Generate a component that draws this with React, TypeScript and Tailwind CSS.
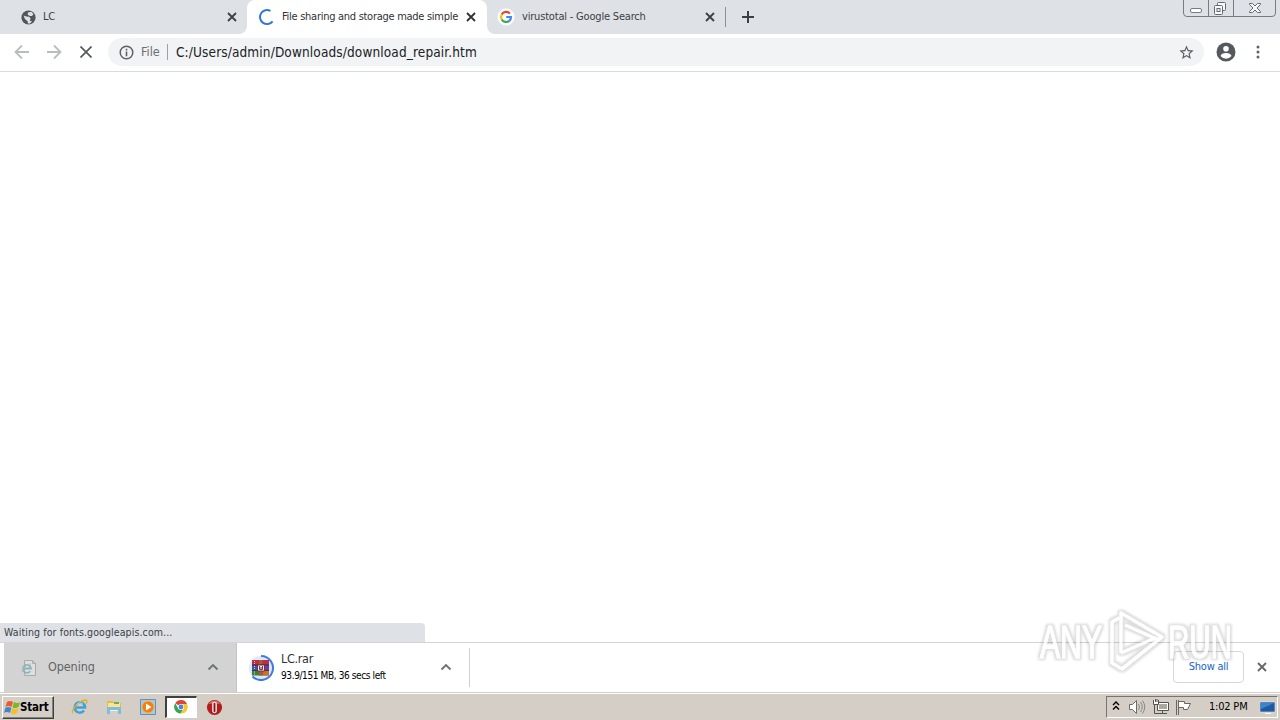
import { type ReactNode } from 'react';
import clsx from 'clsx';

interface IconProps {
  className?: string;
}

function Close({ className }: IconProps) {
  return (
    <svg viewBox="0 0 10 10" className={clsx('shrink-0', className)} fill="none" stroke="currentColor">
      <path d="M1 1l8 8M9 1l-8 8" strokeWidth="1.8" />
    </svg>
  );
}

function Globe() {
  return (
    <svg viewBox="0 0 24 24" className="h-[17px] w-[17px] shrink-0 text-[#50555b]" fill="currentColor">
      <circle cx="12" cy="12" r="10" />
      <path d="M5 9l4 1.500 4 .5 2 2.500-1 3 3 1-3 3h-3v-3L7 14z" fill="#dee1e6" />
      <path d="M11 5l5-1 3 3-2 3h-3l-3-2z" fill="#dee1e6" />
    </svg>
  );
}

function Spinner() {
  return (
    <svg viewBox="0 0 18 18" className="h-[18px] w-[18px] shrink-0" fill="none">
      <path d="M12.500 3A7 7 0 1 0 14.600 13.300" stroke="#3478d4" strokeWidth="2" />
    </svg>
  );
}

function Google() {
  return (
    <svg viewBox="0 0 18 18" className="h-[18px] w-[18px] shrink-0">
      <circle cx="9" cy="9" r="8.500" fill="#fff" />
      <g fill="none" strokeWidth="2.200">
        <path d="M12.900 5.600A5 5 0 0 0 4.700 6.500" stroke="#ea4335" />
        <path d="M4.700 6.500a5 5 0 0 0 0 5" stroke="#fbbc05" />
        <path d="M4.700 11.500a5 5 0 0 0 7.600 1.300" stroke="#34a853" />
        <path d="M12.300 12.800A5 5 0 0 0 14 9H9.200" stroke="#4285f4" />
      </g>
    </svg>
  );
}

function Chevron({ className }: IconProps) {
  return (
    <svg viewBox="0 0 12 8" className={clsx('mb-px h-2 w-3 shrink-0', className)} fill="none">
      <path d="M1.500 6.500L6 2l4.500 4.500" stroke="#6f7377" strokeWidth="1.900" />
    </svg>
  );
}

function TabCorner({ flip }: { flip?: boolean }) {
  return (
    <svg viewBox="0 0 8 8" className={clsx('h-2 w-2 shrink-0 self-end', flip && '-scale-x-100')}>
      <path d="M8 0v8H0a8 8 0 0 0 8-8z" fill="#fff" />
    </svg>
  );
}

function TabStrip() {
  return (
    <div className="flex h-[34px] bg-[#dee1e6] text-[11px] text-[#3c4043]">
      <div className="flex w-[239px] items-center pl-5">
        <Globe />
        <span className="ml-[6px] flex-1 tracking-[-0.2px]">LC</span>
        <Close className="mr-[2px] h-[10px] w-[10px]" />
      </div>
      <TabCorner />
      <div className="flex w-[240px] items-center rounded-t-lg bg-white pl-[11px] text-[#303134]">
        <Spinner />
        <span className="ml-[6px] w-[179px] whitespace-nowrap tracking-[-0.28px]">File sharing and storage made simple</span>
        <Close className="ml-[5px] h-[10px] w-[10px]" />
      </div>
      <TabCorner flip />
      <div className="flex w-[230px] items-center pl-[2px]">
        <Google />
        <span className="ml-[7px] w-[183px] whitespace-nowrap tracking-[-0.19px]">virustotal - Google Search</span>
        <Close className="h-[10px] w-[10px]" />
      </div>
      <div className="mt-[7px] h-5 w-px bg-[#8b9095]" />
      <svg viewBox="0 0 12 12" className="mt-[11px] ml-4 h-3 w-3">
        <path d="M6 0v12M0 6h12" stroke="#3c4043" strokeWidth="2" />
      </svg>
      <svg viewBox="0 0 94 18" className="mr-[3px] ml-auto h-[18px] w-[94px]" fill="none" stroke="#777b84">
        <path d="M.5 0v13q0 3.500 3.500 3.500h85q3.500 0 3.500-3.500V0M25.500 0v16M50.500 0v16" />
        <rect x="7.500" y="8.500" width="11" height="4" rx="1.500" fill="#fff" />
        <g fill="#f8f9fa" stroke="#656972">
          <rect x="34.500" y="2.500" width="8" height="8" rx="1" />
          <rect x="31.500" y="5.500" width="8" height="9" rx="1" />
          <rect x="34" y="8.500" width="3" height="3" />
          <path d="M66.500 3.500h3l2.500 2.500 2.500-2.500h3v1L74 8l3.500 3.500v1h-3L72 10l-2.500 2.500h-3v-1L70 8l-3.500-3.500z" />
        </g>
      </svg>
    </div>
  );
}

function Toolbar() {
  return (
    <div className="flex h-[38px] items-center border-b border-[#d9dbde] bg-white pb-px pl-[14px]">
      <svg viewBox="0 0 16 16" className="h-4 w-4" fill="none" stroke="#babcbe" strokeWidth="1.800">
        <path d="M15 8H2M8 1.500L1.500 8 8 14.500" />
      </svg>
      <svg viewBox="0 0 16 16" className="ml-4 h-4 w-4" fill="none" stroke="#babcbe" strokeWidth="1.800">
        <path d="M1 8h13M8 1.500L14.500 8 8 14.500" />
      </svg>
      <svg viewBox="0 0 12 12" className="ml-[18px] h-3 w-3" fill="none" stroke="#55585c" strokeWidth="1.700">
        <path d="M.5.5l11 11M11.500.5l-11 11" />
      </svg>
      <div className="ml-4 flex h-7 w-[1096px] items-center rounded-full bg-[#f1f3f4] pl-[11px]">
        <svg viewBox="0 0 16 16" className="h-[15px] w-[15px]" fill="none" stroke="#5f6368" strokeWidth="1.600">
          <circle cx="8" cy="8" r="6.700" />
          <path d="M8 7v5M8 4v1.800" strokeWidth="1.700" />
        </svg>
        <span className="ml-[7px] w-[19px] text-[12.500px] text-[#6b6f73]">File</span>
        <div className="ml-[7px] h-4 w-px bg-[#9aa0a6]" />
        <span className="ml-[8px] text-[13.500px] tracking-[0.13px] text-[#202124]">
          C:/Users/admin/Downloads/download_repair.htm
        </span>
        <svg viewBox="0 0 24 24" className="mr-[9px] ml-auto h-[17px] w-[17px]" fill="#5a5e63">
          <path d="M22 9.240l-7.190-.62L12 2 9.190 8.630 2 9.240l5.460 4.730L5.820 21 12 17.270 18.180 21l-1.630-7.030L22 9.240zM12 15.400l-3.760 2.270 1-4.280-3.320-2.880 4.380-.38L12 6.100l1.710 4.040 4.380.38-3.320 2.880 1 4.280L12 15.400z" />
        </svg>
      </div>
      <svg viewBox="0 0 20 20" className="ml-3 h-5 w-5">
        <circle cx="10" cy="10" r="9.500" fill="#55595e" />
        <circle cx="10" cy="6.800" r="2.800" fill="#fff" />
        <path d="M4.500 14q1-3 5.500-3t5.500 3a7 7 0 0 1-11 0z" fill="#fff" />
      </svg>
      <svg viewBox="0 0 4 14" className="ml-5 h-[14px] w-1" fill="#5f6368">
        <circle cx="2" cy="2" r="1.500" />
        <circle cx="2" cy="7" r="1.500" />
        <circle cx="2" cy="12" r="1.500" />
      </svg>
    </div>
  );
}

function RarIcon() {
  return (
    <svg viewBox="0 0 26 26" className="-ml-px h-[26px] w-[26px] shrink-0">
      <circle cx="13" cy="13" r="12" fill="#dbe9fb" />
      <path d="M13 1a12 12 0 1 1-8.500 20.500" stroke="#3d7de0" strokeWidth="2" fill="none" />
      <path d="M4 5h17v5H4z" fill="#c52b45" />
      <path d="M4 10h17v5.500H4z" fill="#3659a5" />
      <path d="M4 15.500h17v5H4z" fill="#39803b" />
      <path d="M14 5h7v5h-7z" fill="#b92f45" />
      <path d="M15 10h6v5h-6z" fill="#6c419d" />
      <path d="M15 15.500h6v5h-6z" fill="#d46b29" />
      <path d="M11 5h3.500v15.500H11z" fill="#a95b2d" />
      <path d="M4 10h17M4 15.500h17" stroke="#242740" strokeWidth=".8" />
      <path d="M9.500 10h7v6h-7z" fill="#eee" stroke="#713645" />
      <path d="M11.500 11v3.500h3V11M13 12v2" stroke="#8b3547" fill="none" />
      <path d="M6.500 6v3m0 2v3m0 2.500v3" stroke="#edcbc0" strokeDasharray="1 1" />
    </svg>
  );
}

function DownloadBar() {
  return (
    <div className="flex h-[50px] border-t border-[#d4d4d6] bg-white pl-1">
      <div className="flex w-[232px] items-center bg-[#d3d3d3] pl-4">
        <svg viewBox="0 0 18 18" className="h-[18px] w-[18px]" fill="none">
          <path d="M4.500 1.500h8l3 3v12h-11z" fill="#dedfda" stroke="#a9aba8" />
          <path d="M12.500 1.500v3h3" stroke="#a9aba8" />
          <path d="M3 9.500h8a4 4 0 1 0-.8 2.800" stroke="#86b3c7" strokeWidth="1.800" />
          <path d="M1.500 13C3 9 7 5 11 5" stroke="#c3bd91" />
        </svg>
        <span className="ml-[10px] flex-1 text-[12.500px] tracking-[-0.1px] text-[#636363]">Opening</span>
        <Chevron className="mr-[17px]" />
      </div>
      <div className="w-px bg-[#c4c4c4]" />
      <div className="flex w-[232px] items-center pl-3">
        <RarIcon />
        <div className="ml-[7px] flex-1 whitespace-nowrap">
          <div className="h-4 text-[12.500px] leading-4 tracking-[-0.3px] text-[#303134]">LC.rar</div>
          <div className="mt-px h-4 text-[10px] leading-4 tracking-[-0.39px] text-black">93.9/151 MB, 36 secs left</div>
        </div>
        <Chevron className="mr-[17px]" />
      </div>
      <div className="my-[5px] w-px bg-[#d0d0d3]" />
      <div className="mt-2 mr-[13px] ml-auto flex h-8 w-[71px] items-center justify-center rounded border border-[#d5d8dc] text-[11px] leading-[12px] tracking-[-0.25px] text-[#1765c5]">
        Show all
      </div>
      <Close className="mt-[19px] mr-[13px] h-[10px] w-[10px] text-[#666]" />
    </div>
  );
}

function Watermark() {
  return (
    <svg viewBox="0 0 212 72" className="pointer-events-none absolute top-[604px] left-[1030px] h-[72px] w-[212px]">
      <defs>
        <filter id="mark-halo" x="-10%" y="-10%" width="120%" height="120%">
          <feMorphology in="SourceAlpha" operator="dilate" radius="1.5" />
          <feGaussianBlur stdDeviation="1.3" />
          <feComponentTransfer result="shade">
            <feFuncA type="linear" slope=".15" />
          </feComponentTransfer>
          <feMerge>
            <feMergeNode in="shade" />
            <feMergeNode in="SourceGraphic" />
          </feMerge>
        </filter>
      </defs>
      <g
        filter="url(#mark-halo)"
        fill="#fff"
        stroke="#fff"
        strokeWidth=".7"
        opacity=".88"
        fontFamily="Liberation Sans, sans-serif"
        fontSize="46"
      >
        <text x="10" y="54" textLength="62" lengthAdjust="spacingAndGlyphs">ANY</text>
        <text x="138" y="54" textLength="64" lengthAdjust="spacingAndGlyphs">RUN</text>
        <path
          d="M91 49V9l41 24-40 32-10-6V18l7-4M95 21l34 15M91 49l34-15"
          fill="none"
          strokeWidth="3"
          strokeLinejoin="round"
        />
      </g>
    </svg>
  );
}

function WindowsFlag() {
  return (
    <svg viewBox="0 0 17 16" className="h-4 w-[17px]">
      <path d="M3 2q3-2 6 0L7.500 7q-3-2-6 0z" fill="#ee5b25" />
      <path d="M10 2q3 2 6 .3L14.500 7q-3 2-6 .2z" fill="#79b72d" />
      <path d="M1.300 8q3-2 6 0L6 13q-3-2-6 0z" fill="#3b88d0" />
      <path d="M8.300 8q3 2 6 .3L13 13q-3 2-6 .2z" fill="#f5be21" />
    </svg>
  );
}

function QuickLaunch({ children, active }: { children: ReactNode; active?: boolean }) {
  return (
    <div
      className={clsx(
        'flex h-[22px] items-center justify-center',
        active
          ? 'w-8 border-t-2 border-r border-b border-l-2 border-t-[#404040] border-r-white border-b-white border-l-[#404040] bg-white pr-[2px]'
          : 'w-[34px]',
      )}
    >
      {children}
    </div>
  );
}

function Taskbar() {
  return (
    <div className="flex h-[28px] items-start border-t border-[#d5cec7] bg-[#d5cec7] pt-[3px] shadow-[inset_0_1px_0_#fff]">
      <div className="ml-[2px] flex h-[23px] w-[52px] items-center border border-t-white border-r-[#404040] border-b-[#404040] border-l-white pl-px shadow-[inset_-1px_-1px_0_#85817b]">
        <WindowsFlag />
        <span className="-ml-px text-[11.500px] font-bold tracking-[-0.2px] text-black">Start</span>
      </div>
      <div className="ml-[9px] flex">
        <QuickLaunch>
          <svg viewBox="0 0 18 18" className="h-[18px] w-[18px]" fill="none">
            <path d="M4 9.500h10a5.200 5.200 0 1 0-1 3" stroke="#3fa0dc" strokeWidth="2.500" />
            <path d="M2 15c-3-1 5-12 12-13 3 0 2 2 1 4" stroke="#e0ad24" strokeWidth="1.300" />
            <path d="M5.500 6.500q3-3 6.500-.5" stroke="#8fd5f3" />
          </svg>
        </QuickLaunch>
        <QuickLaunch>
          <svg viewBox="0 0 18 18" className="h-[18px] w-[18px]">
            <path d="M2 3h6l1 2h7v8H2z" fill="#e2bd4e" />
            <path d="M3 5h12v8H3z" fill="#fae391" />
            <path d="M9 4h5v2H9z" fill="#69ad5b" />
            <path d="M2 9h14v7h-3v-4H5v4H2z" fill="#80bddd" />
            <path d="M5 12h8v1H5z" fill="#e8f4ef" />
          </svg>
        </QuickLaunch>
        <QuickLaunch>
          <svg viewBox="0 0 18 18" className="h-[18px] w-[18px]">
            <path d="M1.500 1.500h15v15h-15z" fill="#a9cae2" stroke="#5c93bd" />
            <circle cx="9" cy="9" r="6" fill="#ed8117" stroke="#f8b252" />
            <path d="M7 5.500l5.500 3.500L7 12.500z" fill="#fff" />
          </svg>
        </QuickLaunch>
        <QuickLaunch active>
          <svg viewBox="0 0 16 16" className="mb-px h-[14px] w-[14px]">
            <path d="M8 8L1.500 3.800A7.500 7.500 0 0 1 14.800 4.500H8z" fill="#df4435" />
            <path d="M14.800 4.500A7.500 7.500 0 0 1 7.500 15.500L11 9.500 8 4.500z" fill="#f8c72d" />
            <path d="M7.500 15.500a7.500 7.500 0 0 1-6-11.700L5 10l5 1z" fill="#39a357" />
            <circle cx="8" cy="8" r="3.500" fill="#fff" />
            <circle cx="8" cy="8" r="2.800" fill="#4386df" />
          </svg>
        </QuickLaunch>
        <QuickLaunch>
          <svg viewBox="0 0 18 18" className="h-[17px] w-[17px]">
            <circle cx="9" cy="9" r="8" fill="#b31b1d" />
            <path d="M2.500 5Q9-2 15.500 5z" fill="#dc6668" />
            <rect x="6.500" y="3" width="5" height="12" rx="2.200" fill="#eee" />
            <rect x="8" y="4" width="2" height="10" rx="1" fill="#8e1517" />
          </svg>
        </QuickLaunch>
      </div>
      <div className="mr-[2px] ml-auto flex h-[22px] w-[172px] items-center border border-t-[#77736d] border-r-white border-b-white border-l-[#77736d] pl-[5px]">
        <svg viewBox="0 0 8 10" className="mb-[2px] h-[10px] w-2" fill="none" stroke="#000" strokeWidth="1.400">
          <path d="M1 4l3-3 3 3M1 8.500l3-3 3 3" />
        </svg>
        <svg viewBox="0 0 18 16" className="ml-[8px] h-4 w-[18px]" fill="none" stroke="#8b8884">
          <path d="M1.500 5.500h3L8.500 1.500v13l-4-4h-3z" fill="#fff" stroke="#6d6a67" />
          <path d="M10.500 5q2 3 0 6M12.500 3q3.500 5 0 10M14.500 1.500q4.500 6.500 0 13" />
        </svg>
        <svg viewBox="0 0 18 18" className="ml-[6px] h-[18px] w-[18px]" fill="none" stroke="#56524e">
          <path d="M5.500 4.500h11v8h-11z" fill="#fff" />
          <path d="M7 6h8v5H7z" fill="#aaa7a3" stroke="none" />
          <path d="M10.500 13v2.500M7 15.500h8M2.500 7v8.500H7" />
          <path d="M1.500 2v4.500h5V2M3.500 1v3M5 1v3" fill="#fff" />
        </svg>
        <svg viewBox="0 0 17 17" className="ml-[5px] h-[17px] w-[17px]" fill="none" stroke="#6a6763">
          <path d="M1.500 1v15M3.500 1v15" />
          <path d="M3.500 2.500h6v2h6l-3 6h-4v-2h-5z" fill="#fff" />
        </svg>
        <span className="ml-[17px] w-[42px] text-[11px] tracking-[-0.2px] whitespace-nowrap text-black">1:02 PM</span>
        <svg viewBox="0 0 16 15" className="ml-[9px] h-[15px] w-4">
          <path d="M0 2h15v10H0z" fill="#205a9f" stroke="#e7edf1" strokeWidth=".6" />
          <path d="M1 3h13L1 9z" fill="#3c84cb" />
          <path d="M5 13h6v1H5z" fill="#fafafa" />
        </svg>
      </div>
    </div>
  );
}

export default function App() {
  return (
    <div className="relative flex h-[720px] w-[1280px] flex-col overflow-hidden bg-white font-['DejaVu_Sans_Condensed','DejaVu_Sans',sans-serif]">
      <TabStrip />
      <Toolbar />
      <main className="flex flex-1 items-end">
        <div className="flex h-[19px] w-[425px] items-center rounded-tr bg-[#dee1e6] pt-px pl-1 text-[10.500px] tracking-[0.11px] text-[#3c4043]">
          Waiting for fonts.googleapis.com...
        </div>
      </main>
      <DownloadBar />
      <Taskbar />
      <Watermark />
    </div>
  );
}
